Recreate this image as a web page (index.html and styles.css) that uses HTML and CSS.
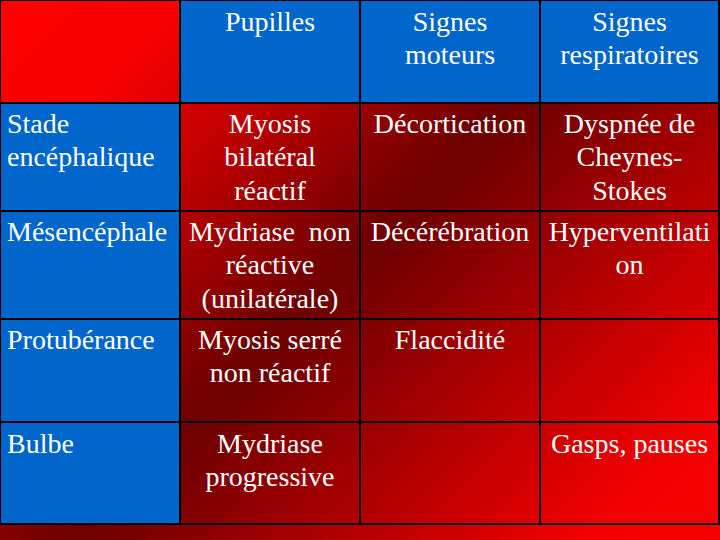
FILE: index.html
```html
<!DOCTYPE html>
<html lang="fr">
<head>
<meta charset="utf-8">
<title>Stades</title>
<link rel="stylesheet" href="styles.css">
</head>
<body>
<div class="table">
  <div class="cell head corner"></div>
  <div class="cell head blue">Pupilles</div>
  <div class="cell head blue">Signes<br>moteurs</div>
  <div class="cell head blue">Signes<br>respiratoires</div>

  <div class="cell stage blue r1">Stade<br>encéphalique</div>
  <div class="cell r1">Myosis<br>bilatéral<br>réactif</div>
  <div class="cell r1">Décortication</div>
  <div class="cell r1">Dyspnée de<br>Cheynes-<br>Stokes</div>

  <div class="cell stage blue r2">Mésencéphale</div>
  <div class="cell r2">Mydriase&nbsp; non<br>réactive<br>(unilatérale)</div>
  <div class="cell r2">Décérébration</div>
  <div class="cell r2">Hyperventilati<br>on</div>

  <div class="cell stage blue r3">Protubérance</div>
  <div class="cell r3">Myosis serré<br>non réactif</div>
  <div class="cell r3">Flaccidité</div>
  <div class="cell r3"></div>

  <div class="cell stage blue r4">Bulbe</div>
  <div class="cell r4">Mydriase<br>progressive</div>
  <div class="cell r4"></div>
  <div class="cell r4">Gasps, pauses</div>
</div>
</body>
</html>
```

FILE: styles.css
```css
html, body {
  margin: 0;
  padding: 0;
  width: 720px;
  height: 540px;
  overflow: hidden;
}

body {
  background: linear-gradient(135deg, #ff0000 0%, #f80000 15%, #6e0000 48%, #720000 51%, #f50000 90%, #f70000 100%);
  color: #ffffff;
}

.table {
  display: grid;
  grid-template-columns: 180px 180px 180px 179px;
  grid-template-rows: 103px 108px 108px 103px 102px;
  border-top: 1px solid #000;
  border-left: 1px solid #000;
  width: 720px;
  box-sizing: border-box;
  font-family: 'Liberation Serif', 'Tinos', 'Times New Roman', 'DejaVu Serif', serif;
  font-size: 28px;
  line-height: 33.4px;
}

.cell {
  box-sizing: border-box;
  border-right: 2px solid #000;
  border-bottom: 2px solid #000;
  text-align: center;
  padding: 3px 2px 0 2px;
}

.head {
  padding-top: 4px;
}

.blue {
  background: #0066cc;
}

.stage {
  text-align: left;
  padding-left: 6px;
}

.r4 {
  padding-top: 4px;
}
```
